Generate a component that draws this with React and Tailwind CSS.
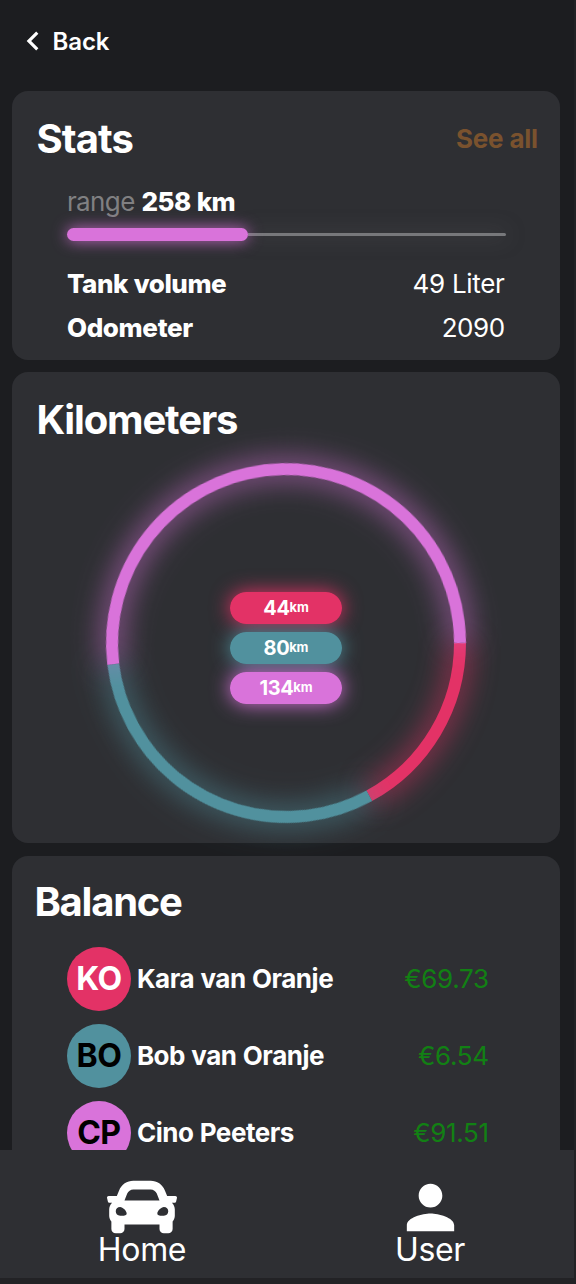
import React from "react";
import { FaCar } from "react-icons/fa";
import { MdPerson, MdChevronLeft } from "react-icons/md";

const R = 174;
const C = 2 * Math.PI * R;
const TOTAL = 258;

const segments = [
  { km: 44, start: 0, color: "#e33266", pill: "bg-[#e33266]", glow: "shadow-[0_0_20px_#e33266]" },
  { km: 80, start: 44, color: "#51919e", pill: "bg-[#51919e]", glow: "shadow-[0_0_20px_#51919e]" },
  { km: 134, start: 124, color: "#d973da", pill: "bg-[#d973da]", glow: "shadow-[0_0_20px_#d973da]" },
];

const people = [
  { initials: "KO", name: "Kara van Oranje", amount: "€69.73", avatar: "bg-[#e33266] text-white" },
  { initials: "BO", name: "Bob van Oranje", amount: "€6.54", avatar: "bg-[#51919e] text-black" },
  { initials: "CP", name: "Cino Peeters", amount: "€91.51", avatar: "bg-[#d973da] text-black" },
];

function Ring() {
  return (
    <svg className="col-start-1 row-start-1 overflow-visible" width="360" height="360" viewBox="-180 -180 360 360">
      {segments.map((s) => (
        <circle
          key={s.km}
          r={R}
          fill="none"
          stroke={s.color}
          strokeWidth="12"
          strokeDasharray={`${(s.km / TOTAL) * C} ${C}`}
          transform={`rotate(${(s.start / TOTAL) * 360})`}
          style={{ filter: `drop-shadow(0 0 15px ${s.color})` }}
        />
      ))}
    </svg>
  );
}

export default function App() {
  return (
    <div className="flex h-[1284px] w-[576px] flex-col overflow-hidden bg-[#222225] font-['Inter',sans-serif] text-white">
      <div className="flex h-[1150px] w-[574px] shrink-0 flex-col overflow-hidden bg-[#1c1d20]">
        <header className="flex h-[91px] shrink-0 items-start pt-[22px] pl-[14px]">
          <MdChevronLeft size={38} />
          <span className="pt-px pl-[0.5px] text-2xl leading-[38px] font-semibold tracking-[-0.1px]">Back</span>
        </header>
        <main className="flex flex-col gap-[12.8px] pr-[14.4px] pl-[12.4px] tracking-[-0.47px] [word-spacing:0.6px]">
          <section className="h-[268.7px] shrink-0 rounded-2xl bg-[#2e2f33] pt-6">
            <div className="flex h-12 items-center justify-between pr-[22px] pl-6">
              <h1 className="text-[40px] leading-[48px] font-bold tracking-[-0.9px]">Stats</h1>
              <a className="text-[26px] leading-8 font-bold tracking-[-0.35px] text-[#7a522e]">See all</a>
            </div>
            <div className="pt-[23px] pr-[54px] pl-[54.5px] text-[26px] leading-8">
              <p>
                <span className="tracking-[-0.6px] text-[#808082] [word-spacing:0px]">range </span>
                <b className="font-extrabold">258 km</b>
              </p>
              <div className="mt-[10px] flex h-[13px] items-center">
                <div className="z-10 h-[13px] w-[181.5px] rounded-full bg-[#d973da] shadow-[0_0_15px_#d973dadd]" />
                <div className="h-[3.5px] flex-1 rounded-r-full bg-[#77787b] shadow-[0_0_20px_#80808088]" />
              </div>
              <div className="mt-[27px] flex justify-between">
                <b className="font-extrabold">Tank volume</b>
                <span className="pr-px tracking-[-0.3px] [word-spacing:0px]">49 Liter</span>
              </div>
              <div className="mt-3 flex justify-between">
                <b className="font-extrabold tracking-[-0.35px]">Odometer</b>
                <span className="pr-px">2090</span>
              </div>
            </div>
          </section>
          <section className="h-[471px] shrink-0 rounded-2xl bg-[#2e2f33] pt-[23.5px]">
            <h1 className="pl-6 text-[40px] leading-[48px] font-bold tracking-[-1.15px]">Kilometers</h1>
            <div className="mt-[19.2px] grid place-items-center">
              <Ring />
              <div className="col-start-1 row-start-1 flex flex-col gap-2 pt-[9.2px]">
                {segments.map((s) => (
                  <div key={s.km} className={`h-8 w-28 rounded-full ${s.glow}`} />
                ))}
              </div>
              <div className="z-10 col-start-1 row-start-1 flex flex-col gap-2 pt-[9.2px]">
                {segments.map((s) => (
                  <div key={s.km} className={`flex h-8 w-28 items-center justify-center rounded-full font-bold ${s.pill}`}>
                    <span className="text-xl">{s.km}</span>
                    <span className="text-[13px] tracking-[-0.1px]">km</span>
                  </div>
                ))}
              </div>
            </div>
          </section>
          <section className="h-[430px] shrink-0 rounded-2xl bg-[#2e2f33] pt-[22px]">
            <h1 className="pl-[22px] text-[40px] leading-[48px] font-bold tracking-[-1.25px]">Balance</h1>
            <div className="mt-[21px] flex flex-col gap-[12.8px] pr-[71px] pl-[54.5px]">
              {people.map((p) => (
                <div key={p.initials} className="flex h-16 items-center text-[26px] leading-[40px]">
                  <div className={`flex size-16 items-center justify-center rounded-full text-[32px] font-bold tracking-[-0.6px] ${p.avatar}`}>
                    {p.initials}
                  </div>
                  <span className="ml-[6px] flex-1 font-bold">{p.name}</span>
                  <span className="tracking-[-0.35px] text-[#128014]">{p.amount}</span>
                </div>
              ))}
            </div>
          </section>
        </main>
      </div>
      <nav className="flex h-[128px] w-[574px] shrink-0 bg-[#2e2f33] tracking-[-0.3px]">
        <div className="flex w-[284px] flex-col items-center pt-[22px]">
          <FaCar size={70} />
          <span className="-mt-[11px] pr-px pl-[2px] text-[32px] leading-[38px]">Home</span>
        </div>
        <div className="flex w-[292px] flex-col items-center pt-[22px]">
          <MdPerson size={71} className="ml-[3px]" />
          <span className="-mt-[12px] pl-[3px] text-[32px] leading-[38px]">User</span>
        </div>
      </nav>
    </div>
  );
}
